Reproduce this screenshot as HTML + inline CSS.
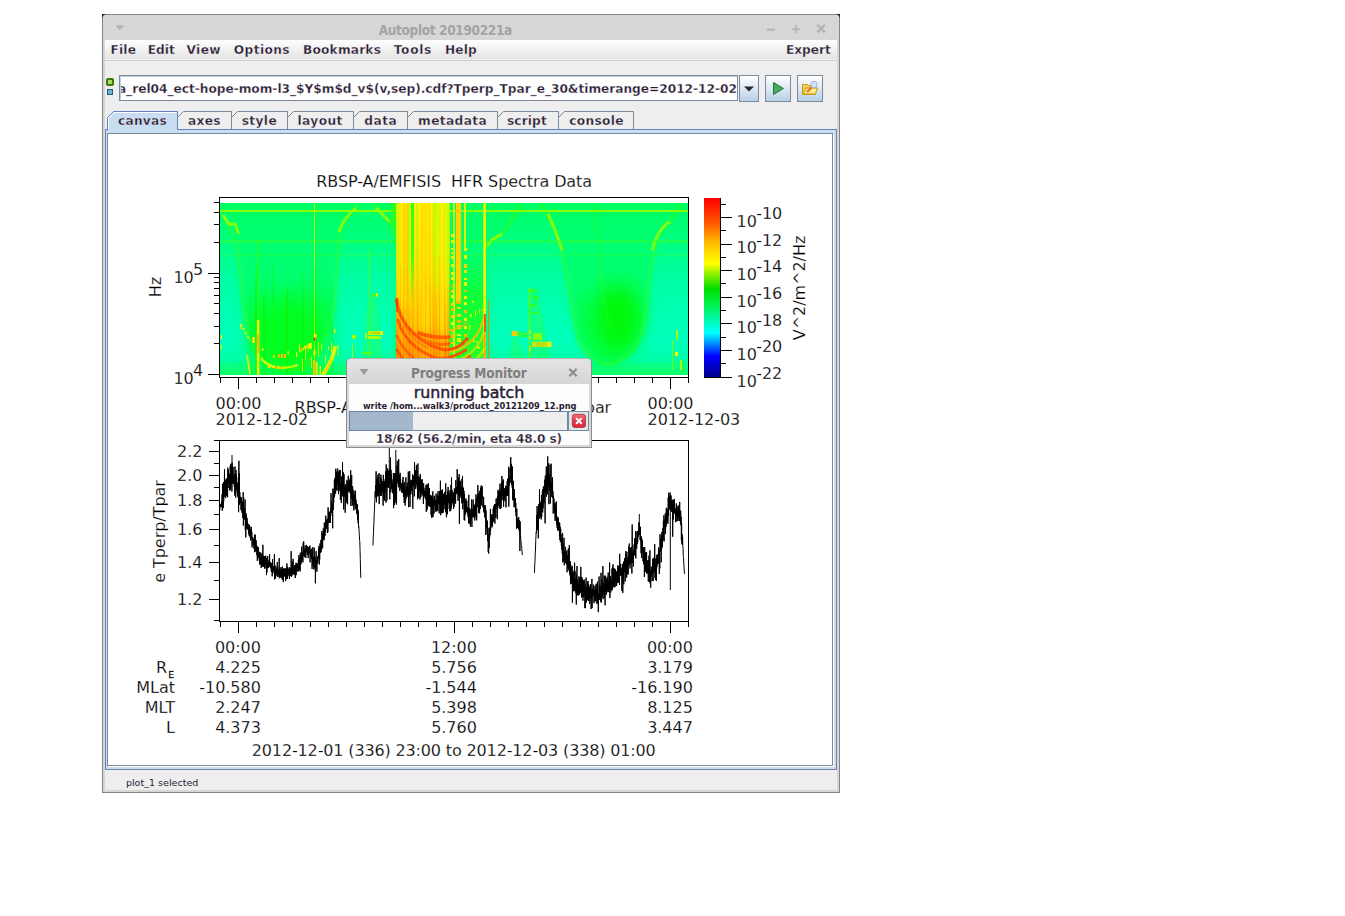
<!DOCTYPE html><html><head><meta charset="utf-8"><title>Autoplot 20190221a</title><style>
html,body{margin:0;padding:0;background:#fff;}
body{width:1345px;height:916px;position:relative;overflow:hidden;font-family:"DejaVu Sans","Liberation Sans",sans-serif;}
.abs{position:absolute;}
.t{position:absolute;white-space:pre;color:#2b1a33;}
.u{font-family:"DejaVu Sans","Liberation Sans",sans-serif;}
.c{font-family:"DejaVu Sans Condensed","DejaVu Sans","Liberation Sans",sans-serif;}
.bd{font-weight:bold;-webkit-text-stroke:0.4px rgba(244,244,244,.75);}
#win{left:102px;top:14px;width:738px;height:779px;background:#d7d7d7;box-sizing:border-box;border:1px solid #858585;}
#menubar{left:105px;top:40px;width:732px;height:19px;background:linear-gradient(#fefefe,#e4e4e4);}
#content{left:105px;top:60px;width:732px;height:730px;background:#eeeeee;}
svg text{font-family:"DejaVu Sans","Liberation Sans",sans-serif;}
</style></head><body>
<div id="win" class="abs"></div>
<svg class="abs" style="left:0;top:0" width="1345" height="916" viewBox="0 0 1345 916">
<path d="M102 14h4l-2 1-1 1-1 2z" fill="#0b2140"/><path d="M840 14h-4l2 1 1 1 1 2z" fill="#0b2140"/>
<path d="M115.5 25.2h8.6l-4.3 5.4z" fill="#b2b2b2"/>
<path d="M767 29.7h8" stroke="#b5b5b5" stroke-width="2" fill="none"/>
<path d="M792 29.2h8M796 25.2v8" stroke="#b5b5b5" stroke-width="1.8" fill="none"/>
<path d="M817.3 24.8l7.6 7.6M824.9 24.8l-7.6 7.6" stroke="#b2b2b2" stroke-width="2.2" fill="none"/>
</svg>
<div class="t c bd" style="left:378.70px;top:20.83px;font-size:13.5px;line-height:18px;letter-spacing:-0.335px;color:#a3a3a3;-webkit-text-stroke:0;">Autoplot 20190221a</div>
<div id="menubar" class="abs"></div>
<div id="content" class="abs"></div>
<div class="abs" style="left:105px;top:59px;width:732px;height:1px;background:#f1f1f1"></div>
<div class="abs" style="left:105px;top:60px;width:732px;height:1px;background:#cccccc"></div>
<div class="t u bd" style="left:110.60px;top:42.38px;font-size:12.2px;line-height:16px;letter-spacing:0.137px;">File</div>
<div class="t u bd" style="left:147.80px;top:42.38px;font-size:12.2px;line-height:16px;letter-spacing:-0.041px;">Edit</div>
<div class="t u bd" style="left:186.40px;top:42.38px;font-size:12.2px;line-height:16px;letter-spacing:0.42px;">View</div>
<div class="t u bd" style="left:233.80px;top:42.38px;font-size:12.2px;line-height:16px;letter-spacing:0.399px;">Options</div>
<div class="t u bd" style="left:303.00px;top:42.38px;font-size:12.2px;line-height:16px;letter-spacing:0.185px;">Bookmarks</div>
<div class="t u bd" style="left:393.70px;top:42.38px;font-size:12.2px;line-height:16px;letter-spacing:0.705px;">Tools</div>
<div class="t u bd" style="left:444.90px;top:42.38px;font-size:12.2px;line-height:16px;letter-spacing:0.181px;">Help</div>
<div class="t u bd" style="left:785.90px;top:42.38px;font-size:12.2px;line-height:16px;letter-spacing:-0.019px;">Expert</div>
<div class="abs" style="left:106px;top:78px;width:8px;height:8px;box-sizing:border-box;border:2px solid #3c7a00;border-radius:2px;background:#a6d96a"></div>
<div class="abs" style="left:107px;top:89px;width:6px;height:6px;box-sizing:border-box;border:1px solid #1f5c80;background:#6fb1d6"></div>
<div class="abs" style="left:119px;top:75px;width:619px;height:26px;box-sizing:border-box;border:1px solid #7a8a99;background:#fff;overflow:hidden;box-shadow:inset 1px 1px 0 #b8cfe5"></div>
<div class="abs" style="left:121px;top:77px;width:616px;height:22px;overflow:hidden">
<div class="t u bd" style="left:-3.10px;top:4.48px;font-size:12.2px;line-height:16px;letter-spacing:-0.031px;">a_rel04_ect-hope-mom-l3_$Y$m$d_v$(v,sep).cdf?Tperp_Tpar_e_30&amp;timerange=2012-12-02</div>
</div>
<div class="abs" style="left:739px;top:75px;width:20px;height:27px;box-sizing:border-box;border:1px solid #7a8a99;background:linear-gradient(#ffffff 0%,#e4edf6 40%,#b8cfe5 100%);"><svg width="18" height="25" style="position:absolute;left:0;top:0"><path d="M4 10.5h10l-5 5z" fill="#2a2a2a"/></svg></div>
<div class="abs" style="left:765px;top:75px;width:26px;height:27px;box-sizing:border-box;border:1px solid #7a8a99;background:linear-gradient(#ffffff 0%,#e4edf6 40%,#b8cfe5 100%);"><svg width="24" height="25" style="position:absolute;left:0;top:0"><path d="M7.5 6.5l10 6-10 6z" fill="#4aa95a" stroke="#1e7a34" stroke-width="1"/></svg></div>
<div class="abs" style="left:797px;top:75px;width:26px;height:27px;box-sizing:border-box;border:1px solid #7a8a99;background:linear-gradient(#ffffff 0%,#e4edf6 40%,#b8cfe5 100%);"><svg width="24" height="25" style="position:absolute;left:0;top:0"><path d="M4.5 8.5h5l1 1h7v9h-13z" fill="#f5d060" stroke="#c49a10" stroke-width="1"/><path d="M5.5 18l2-6h12l-2 6z" fill="#ffe98a" stroke="#c49a10" stroke-width="1"/><path d="M9 16l5-5" stroke="#e0702a" stroke-width="2"/><circle cx="16" cy="8.5" r="3.2" fill="#cfe4fb" stroke="#a9b8cf" stroke-width="1"/></svg></div>
<svg class="abs" style="left:0;top:0" width="1345" height="916" viewBox="0 0 1345 916" shape-rendering="crispEdges">
<rect x="105.5" y="129.5" width="731" height="640" fill="#c8ddf2" stroke="#6382bf"/>
<path d="M836.5 130V769.5H105" fill="none" stroke="#71849b"/>
<path d="M833.5 134V766.5H108" fill="none" stroke="#ffffff"/>
<rect x="107.5" y="133.5" width="725" height="632" fill="#ffffff" stroke="#7a8a99"/>
<path d="M107.5 130.5V117.5L113.5 111.5H177.5V129.5" fill="#c8ddf2" stroke="#6382bf" shape-rendering="geometricPrecision"/>
<path d="M108.5 129.5V118L114 112.5H176.5" fill="none" stroke="#ffffff" shape-rendering="geometricPrecision"/>
<rect x="108" y="129" width="69" height="2" fill="#c8ddf2"/>
<path d="M177.5 117.5L183.5 111.5H231.5V129" fill="#eeeeee" stroke="#7a8a99" shape-rendering="geometricPrecision"/>
<path d="M231.5 117.5L237.5 111.5H287.5V129" fill="#eeeeee" stroke="#7a8a99" shape-rendering="geometricPrecision"/>
<path d="M287.5 117.5L293.5 111.5H353.5V129" fill="#eeeeee" stroke="#7a8a99" shape-rendering="geometricPrecision"/>
<path d="M353.5 117.5L359.5 111.5H407.5V129" fill="#eeeeee" stroke="#7a8a99" shape-rendering="geometricPrecision"/>
<path d="M407.5 117.5L413.5 111.5H497.5V129" fill="#eeeeee" stroke="#7a8a99" shape-rendering="geometricPrecision"/>
<path d="M497.5 117.5L503.5 111.5H558.5V129" fill="#eeeeee" stroke="#7a8a99" shape-rendering="geometricPrecision"/>
<path d="M558.5 117.5L564.5 111.5H633.5V129" fill="#eeeeee" stroke="#7a8a99" shape-rendering="geometricPrecision"/>
</svg>
<div class="t u bd" style="left:118.10px;top:112.98px;font-size:12.2px;line-height:16px;letter-spacing:0.206px;">canvas</div>
<div class="t u bd" style="left:188.10px;top:112.98px;font-size:12.2px;line-height:16px;letter-spacing:0.298px;">axes</div>
<div class="t u bd" style="left:241.70px;top:112.98px;font-size:12.2px;line-height:16px;letter-spacing:0.386px;">style</div>
<div class="t u bd" style="left:297.50px;top:112.98px;font-size:12.2px;line-height:16px;letter-spacing:0.407px;">layout</div>
<div class="t u bd" style="left:364.30px;top:112.98px;font-size:12.2px;line-height:16px;letter-spacing:0.475px;">data</div>
<div class="t u bd" style="left:418.10px;top:112.98px;font-size:12.2px;line-height:16px;letter-spacing:0.373px;">metadata</div>
<div class="t u bd" style="left:507.00px;top:112.98px;font-size:12.2px;line-height:16px;letter-spacing:0.114px;">script</div>
<div class="t u bd" style="left:569.30px;top:112.98px;font-size:12.2px;line-height:16px;letter-spacing:0.292px;">console</div>
<div class="t u" style="left:125.90px;top:777.11px;font-size:9.5px;line-height:12px;letter-spacing:0.025px;">plot_1 selected</div>
<svg class="abs" style="left:0;top:0" width="1345" height="916" viewBox="0 0 1345 916">
<defs>
<linearGradient id="cb" x1="0" y1="0" x2="0" y2="1"><stop offset="0" stop-color="#ff0000"/><stop offset="0.133" stop-color="#ff5400"/><stop offset="0.247" stop-color="#ffb900"/><stop offset="0.365" stop-color="#ffff00"/><stop offset="0.44" stop-color="#70ec00"/><stop offset="0.506" stop-color="#00de00"/><stop offset="0.58" stop-color="#00f040"/><stop offset="0.753" stop-color="#00ffff"/><stop offset="0.882" stop-color="#0000ff"/><stop offset="1" stop-color="#000089"/></linearGradient>
<linearGradient id="bg" x1="0" y1="0" x2="0" y2="1"><stop offset="0" stop-color="#00ff64"/><stop offset="0.22" stop-color="#00ff80"/><stop offset="0.45" stop-color="#00ffa6"/><stop offset="0.8" stop-color="#00ffbc"/><stop offset="0.93" stop-color="#00ffa4"/><stop offset="1" stop-color="#08ff70"/></linearGradient>
<linearGradient id="yb" x1="0" y1="0" x2="0" y2="1"><stop offset="0" stop-color="#ffea00"/><stop offset="0.4" stop-color="#ffda00"/><stop offset="0.65" stop-color="#ffbc00"/><stop offset="0.85" stop-color="#ffa000"/><stop offset="1" stop-color="#ff9000"/></linearGradient>
<linearGradient id="gy" x1="0" y1="0" x2="0" y2="1"><stop offset="0" stop-color="#10ff38" stop-opacity="0"/><stop offset="0.28" stop-color="#10ff38" stop-opacity="0"/><stop offset="0.55" stop-color="#10ff34" stop-opacity=".9"/><stop offset="1" stop-color="#30ff20" stop-opacity=".95"/></linearGradient>
<linearGradient id="fg1" x1="0" y1="0" x2="0" y2="1"><stop offset="0" stop-color="#30ff10"/><stop offset="0.3" stop-color="#30ff10" stop-opacity=".9"/><stop offset="0.6" stop-color="#30ff10" stop-opacity="0"/></linearGradient>
<linearGradient id="fg2" x1="0" y1="0" x2="0" y2="1"><stop offset="0" stop-color="#a8ff00"/><stop offset="0.3" stop-color="#a8ff00" stop-opacity=".9"/><stop offset="0.6" stop-color="#a8ff00" stop-opacity="0"/></linearGradient>
<linearGradient id="fg3" x1="0" y1="0" x2="0" y2="1"><stop offset="0" stop-color="#d0fa00"/><stop offset="0.3" stop-color="#d0fa00" stop-opacity=".9"/><stop offset="0.6" stop-color="#d0fa00" stop-opacity="0"/></linearGradient>
<linearGradient id="ug" gradientUnits="userSpaceOnUse" x1="0" y1="225" x2="0" y2="320"><stop offset="0" stop-color="#00ff38" stop-opacity=".12"/><stop offset="1" stop-color="#00ff30" stop-opacity=".78"/></linearGradient>
<filter id="b0" x="-10%" y="-30%" width="120%" height="160%"><feGaussianBlur stdDeviation="0.7"/></filter>
<filter id="b1" x="-20%" y="-20%" width="140%" height="140%"><feGaussianBlur stdDeviation="1"/></filter>
<filter id="b3" x="-30%" y="-30%" width="160%" height="160%"><feGaussianBlur stdDeviation="4"/></filter>
<filter id="b8" x="-50%" y="-50%" width="200%" height="200%"><feGaussianBlur stdDeviation="10"/></filter>
<clipPath id="sp"><rect x="220" y="203" width="468" height="172"/></clipPath>
<clipPath id="lp"><rect x="220" y="441" width="468" height="180"/></clipPath>
</defs>
<g clip-path="url(#sp)">
<rect x="220" y="203" width="468" height="172" fill="url(#bg)"/>
<path d="M220 203 L222 214 C228 225 233 232 238 250 C242 300 246 335 256 352 C268 368 290 374 300 370 C316 360 330 335 335 300 C337 262 338 238 342 226 C347 214 354 210 358 203 Z" fill="url(#ug)" filter="url(#b3)"/>
<path d="M372 203 C380 212 388 218 392 226 C395 234 396 240 397 250 L397 375 L486 375 L486 250 C488 240 494 238 500 236 C508 228 514 216 520 203 Z" fill="url(#ug)" filter="url(#b3)"/>
<path d="M540 203 C548 214 552 222 558 236 C566 262 570 300 578 338 C586 356 598 366 608 366 C622 364 636 352 642 332 C648 300 650 262 656 242 C662 226 670 222 676 212 L680 203 Z" fill="url(#ug)" filter="url(#b3)"/>
<rect x="220" y="362" width="468" height="13" fill="#20ff40" opacity=".22"/>
<ellipse cx="290" cy="338" rx="40" ry="42" fill="#00ff08" opacity=".7" filter="url(#b8)"/>
<ellipse cx="618" cy="318" rx="22" ry="34" fill="#00f800" opacity=".9" filter="url(#b8)"/>
<path d="M222 214 C228 225 233 232 238 250 C242 300 246 335 256 352 C268 368 290 372 300 368 C316 358 330 335 335 300 C337 262 338 238 342 226 C347 214 354 210 358 203" fill="none" stroke="#48ff00" stroke-width="2.0" opacity="0.5" filter="url(#b1)"/>
<path d="M372 203 C380 212 388 218 392 226 C395 234 396 240 397 250" fill="none" stroke="#48ff00" stroke-width="2" opacity="0.6" filter="url(#b1)"/>
<path d="M486 250 C488 240 494 238 500 236 C508 228 514 216 520 203" fill="none" stroke="#48ff00" stroke-width="2.2" opacity="0.6" filter="url(#b1)"/>
<path d="M540 203 C548 214 552 222 558 236 C566 262 570 300 578 338 C586 356 598 364 608 364 C622 362 636 352 642 332 C648 300 650 262 656 242 C662 226 670 222 676 212 L680 203" fill="none" stroke="#48ff00" stroke-width="2.2" opacity="0.5" filter="url(#b1)"/>
<path d="M596 203 C598 260 602 300 610 330" fill="none" stroke="#48ff00" stroke-width="2" opacity="0.3" filter="url(#b1)"/>
<path d="M223 215 L229 224 L235 224 L239 234" fill="none" stroke="#a0ff00" stroke-width="2.8" opacity=".85" filter="url(#b0)"/>
<path d="M339 232 C342 222 348 214 356 208" fill="none" stroke="#a0ff00" stroke-width="2.8" opacity=".85" filter="url(#b0)"/>
<path d="M376 208 L384 216 L390 222" fill="none" stroke="#a0ff00" stroke-width="2.8" opacity=".85" filter="url(#b0)"/>
<path d="M488 246 C490 239 496 238 502 234" fill="none" stroke="#a0ff00" stroke-width="2.8" opacity=".85" filter="url(#b0)"/>
<path d="M548 214 C552 222 556 232 562 250" fill="none" stroke="#a0ff00" stroke-width="2.8" opacity=".85" filter="url(#b0)"/>
<path d="M652 250 C656 236 662 226 670 222" fill="none" stroke="#a0ff00" stroke-width="2.8" opacity=".85" filter="url(#b0)"/>
<rect x="220" y="210" width="468" height="2" fill="#8cff00"/>
<rect x="220" y="240.5" width="468" height="2" fill="#38ff28" opacity=".7"/>
<rect x="220" y="254" width="468" height="1.5" fill="#38ff28" opacity=".35"/>
<rect x="314" y="203" width="1" height="172" fill="#c8ff00" opacity=".9"/>
<rect x="257.3" y="240" width="1.2" height="135" fill="#40ff00" opacity=".8"/>
<rect x="368.5" y="250" width="1" height="125" fill="#60ff00" opacity=".7"/>
<rect x="286.0" y="296" width="1" height="79" fill="#10f000" opacity="0.53"/>
<rect x="287.1" y="292" width="1" height="83" fill="#10f000" opacity="0.43"/>
<rect x="263.5" y="293" width="1" height="82" fill="#10f000" opacity="0.44"/>
<rect x="314.6" y="268" width="1" height="107" fill="#10f000" opacity="0.34"/>
<rect x="255.6" y="311" width="1" height="64" fill="#10f000" opacity="0.46"/>
<rect x="251.5" y="321" width="1" height="54" fill="#10f000" opacity="0.54"/>
<rect x="302.9" y="299" width="1" height="76" fill="#10f000" opacity="0.30"/>
<rect x="249.3" y="294" width="1" height="81" fill="#10f000" opacity="0.27"/>
<rect x="264.0" y="277" width="1" height="98" fill="#10f000" opacity="0.26"/>
<rect x="287.0" y="288" width="1" height="87" fill="#10f000" opacity="0.50"/>
<rect x="291.6" y="300" width="1" height="75" fill="#10f000" opacity="0.40"/>
<rect x="303.6" y="289" width="1" height="86" fill="#10f000" opacity="0.33"/>
<rect x="331.8" y="322" width="1" height="53" fill="#10f000" opacity="0.50"/>
<rect x="307.5" y="281" width="1" height="94" fill="#10f000" opacity="0.32"/>
<rect x="272.3" y="266" width="1" height="109" fill="#10f000" opacity="0.48"/>
<rect x="281.6" y="313" width="1" height="62" fill="#10f000" opacity="0.37"/>
<rect x="328.5" y="313" width="1" height="62" fill="#10f000" opacity="0.25"/>
<rect x="265.6" y="317" width="1" height="58" fill="#10f000" opacity="0.39"/>
<rect x="330.4" y="286" width="1" height="89" fill="#10f000" opacity="0.27"/>
<rect x="300.9" y="309" width="1" height="66" fill="#10f000" opacity="0.33"/>
<rect x="255.3" y="282" width="1" height="93" fill="#10f000" opacity="0.54"/>
<rect x="311.7" y="269" width="1" height="106" fill="#10f000" opacity="0.32"/>
<rect x="256.5" y="266" width="1" height="109" fill="#10f000" opacity="0.49"/>
<rect x="262.9" y="296" width="1" height="79" fill="#10f000" opacity="0.38"/>
<rect x="264.0" y="306" width="1" height="69" fill="#10f000" opacity="0.29"/>
<rect x="302.1" y="269" width="1" height="106" fill="#10f000" opacity="0.38"/>
<g filter="url(#b0)">
<path d="M261 358 C265 364 272 367.5 281 368 C288 368 294 366.5 298 365" fill="none" stroke="#d4ff00" stroke-width="2.4" opacity=".9"/>
<path d="M240.5 324 L245 332 L250 340" fill="none" stroke="#dcff00" stroke-width="2" stroke-dasharray="3 1.5" opacity=".85"/>
<path d="M247 355 L250 374" fill="none" stroke="#f0e800" stroke-width="1.8" opacity=".9"/>
<path d="M323 375 L332 358.6 L335.4 346" fill="none" stroke="#f0f400" stroke-width="3.8" opacity=".95"/>
<path d="M325 372 L332.5 358" fill="none" stroke="#ffc400" stroke-width="1.3"/>
<path d="M299 352 C303 349 306 347 310 345" fill="none" stroke="#c8ff00" stroke-width="2" opacity=".8"/>
<rect x="256.8" y="320" width="2.6" height="55" fill="#ecf400"/><rect x="257.2" y="334" width="2" height="19" fill="#ffb400"/>
</g>
<rect x="275" y="366" width="2" height="3" fill="#ffb000"/>
<rect x="279.5" y="366" width="2" height="3" fill="#ffb800"/>
<rect x="268" y="364" width="2" height="4" fill="#ffe000"/>
<rect x="271.5" y="365" width="1.5" height="3" fill="#f8f000"/>
<rect x="278" y="354" width="2" height="4" fill="#ffb000"/>
<rect x="281" y="354" width="2" height="4" fill="#ffc000"/>
<rect x="284" y="354" width="2" height="4" fill="#ffc000"/>
<rect x="273" y="355" width="1.5" height="3" fill="#ffe800"/>
<rect x="252.3" y="337" width="2.5" height="6" fill="#ffe000"/>
<rect x="262" y="348" width="1.5" height="3" fill="#ffe800"/>
<rect x="240.3" y="324" width="1.2" height="5" fill="#ffd800"/>
<rect x="220.5" y="335" width="1.5" height="4" fill="#e8f800"/>
<rect x="220.5" y="345" width="1.5" height="4" fill="#d0ff00"/>
<rect x="308.8" y="343" width="3" height="6" fill="#fff000"/>
<rect x="313.6" y="337.4" width="1.6" height="3.5" fill="#ff3000"/>
<rect x="313.7" y="334" width="3" height="3.5" fill="#ffe000"/>
<rect x="313" y="360" width="2.5" height="15" fill="#ffc000"/>
<rect x="316" y="362" width="1.5" height="13" fill="#f0f000"/>
<rect x="319.5" y="366" width="1.5" height="9" fill="#e8ff00"/>
<rect x="313.5" y="350" width="2" height="5" fill="#f8e800"/>
<rect x="334" y="329" width="1.5" height="4" fill="#f0f000"/>
<rect x="304" y="345" width="1.5" height="3" fill="#ffc000"/>
<rect x="300.5" y="347" width="1.5" height="3" fill="#ff9800"/>
<rect x="287.5" y="351" width="1.2" height="4" fill="#f0f000"/>
<rect x="296" y="352" width="1.2" height="5" fill="#e0ff00"/>
<rect x="299" y="344" width="1" height="7" fill="#e8ff00" opacity=".8"/>
<rect x="302" y="359" width="1" height="13" fill="#e8ff00" opacity=".8"/>
<rect x="305" y="346" width="1" height="14" fill="#e8ff00" opacity=".8"/>
<rect x="307.5" y="344" width="1" height="8" fill="#e8ff00" opacity=".8"/>
<rect x="311" y="357" width="1" height="11" fill="#e8ff00" opacity=".8"/>
<rect x="318" y="342" width="1" height="15" fill="#e8ff00" opacity=".8"/>
<rect x="321" y="344" width="1" height="7" fill="#e8ff00" opacity=".8"/>
<rect x="325" y="355" width="1" height="8" fill="#e8ff00" opacity=".8"/>
<rect x="328" y="346" width="1" height="5" fill="#e8ff00" opacity=".8"/>
<rect x="331" y="342" width="1" height="10" fill="#e8ff00" opacity=".8"/>
<rect x="337.5" y="345" width="1" height="11" fill="#e8ff00" opacity=".8"/>
<rect x="352" y="335" width="4" height="4" fill="#90ff00"/>
<rect x="353" y="336" width="2" height="2" fill="#d0ff00"/>
<rect x="365" y="333" width="2" height="6" fill="#e8ff00"/>
<rect x="368" y="331" width="15" height="4" fill="#ffe400"/>
<rect x="372" y="332" width="8" height="2" fill="#ffc400"/>
<rect x="368" y="336" width="13" height="3" fill="#d8ff00"/>
<rect x="376" y="293" width="2" height="4" fill="#f0f000"/>
<rect x="372" y="294" width="4" height="2" fill="#50ff00"/>
<rect x="352" y="343" width="1" height="20" fill="#a0ff00"/>
<rect x="362" y="352" width="10" height="2" fill="#60ff20"/>
<path d="M360 375 L366 312 L370 292 L377 294 L384 375" fill="#30ff30" opacity=".3"/>
<rect x="391" y="203" width="6" height="60" fill="url(#fg1)" opacity=".8"/>
<rect x="396.2" y="203" width="53.3" height="172" fill="url(#yb)"/>
<rect x="403" y="203" width="5" height="172" fill="#ffc400" opacity=".55"/>
<rect x="421" y="203" width="9" height="172" fill="#ffd800" opacity=".55"/>
<rect x="399" y="203" width="4" height="172" fill="#ffe400" opacity=".55"/>
<rect x="440" y="203" width="4" height="172" fill="#ffec00" opacity=".55"/>
<rect x="397" y="203" width="2" height="172" fill="url(#fg3)"/>
<rect x="408" y="203" width="1.5" height="172" fill="url(#fg2)"/>
<rect x="411" y="203" width="3" height="172" fill="url(#fg1)"/>
<rect x="416.5" y="203" width="1" height="172" fill="url(#fg2)"/>
<rect x="433.5" y="203" width="1.5" height="172" fill="url(#fg2)"/>
<rect x="435" y="203" width="5" height="172" fill="url(#fg3)"/>
<rect x="444" y="203" width="5.5" height="172" fill="url(#fg3)"/>
<rect x="401.5" y="203" width="1" height="172" fill="#fbff20" opacity=".45"/>
<rect x="405" y="203" width="1" height="172" fill="#fbff20" opacity=".45"/>
<rect x="409.8" y="203" width="1" height="172" fill="#fbff20" opacity=".45"/>
<rect x="414.6" y="203" width="1" height="172" fill="#fbff20" opacity=".45"/>
<rect x="419" y="203" width="1" height="172" fill="#fbff20" opacity=".45"/>
<rect x="423.5" y="203" width="1" height="172" fill="#fbff20" opacity=".45"/>
<rect x="427" y="203" width="1" height="172" fill="#fbff20" opacity=".45"/>
<rect x="431" y="203" width="1" height="172" fill="#fbff20" opacity=".45"/>
<rect x="437.5" y="203" width="1" height="172" fill="#fbff20" opacity=".45"/>
<rect x="441.5" y="203" width="1" height="172" fill="#fbff20" opacity=".45"/>
<rect x="446" y="203" width="1" height="172" fill="#fbff20" opacity=".45"/>
<rect x="400" y="265" width="1" height="130" fill="#ffa800" opacity=".3"/>
<rect x="407" y="268" width="1" height="130" fill="#ffa800" opacity=".3"/>
<rect x="412.5" y="288" width="1" height="130" fill="#ffa800" opacity=".3"/>
<rect x="417.5" y="269" width="1" height="130" fill="#ffa800" opacity=".3"/>
<rect x="425" y="273" width="1" height="130" fill="#ffa800" opacity=".3"/>
<rect x="429.5" y="285" width="1" height="130" fill="#ffa800" opacity=".3"/>
<rect x="434" y="257" width="1" height="130" fill="#ffa800" opacity=".3"/>
<rect x="439" y="256" width="1" height="130" fill="#ffa800" opacity=".3"/>
<rect x="447.5" y="286" width="1" height="130" fill="#ffa800" opacity=".3"/>
<rect x="449.5" y="203" width="34" height="172" fill="url(#gy)"/>
<rect x="453" y="203" width="2" height="172" fill="#f0f400" opacity=".9"/>
<rect x="456" y="203" width="5" height="100" fill="#ffd200"/>
<rect x="464" y="203" width="2" height="45" fill="#f0f400" opacity=".9"/>
<rect x="451.0" y="234" width="3" height="3" fill="#ffe800"/>
<rect x="451.0" y="240" width="3" height="3" fill="#e8ff00"/>
<rect x="451.0" y="248" width="3" height="2" fill="#e8ff00"/>
<rect x="451.0" y="252" width="3" height="2" fill="#ffd000"/>
<rect x="451.0" y="256" width="3" height="3" fill="#ffe800"/>
<rect x="451.0" y="264" width="3" height="3" fill="#e8ff00"/>
<rect x="451.0" y="272" width="3" height="3" fill="#ffe800"/>
<rect x="451.0" y="277" width="3" height="3" fill="#ffe800"/>
<rect x="451.0" y="285" width="3" height="2" fill="#ffb800"/>
<rect x="451.0" y="290" width="3" height="3" fill="#ffd000"/>
<rect x="451.0" y="295" width="3" height="3" fill="#e8ff00"/>
<rect x="451.0" y="303" width="3" height="3" fill="#ffd000"/>
<rect x="451.0" y="308" width="3" height="3" fill="#ffb800"/>
<rect x="451.0" y="315" width="3" height="3" fill="#ffd000"/>
<rect x="451.0" y="322" width="3" height="3" fill="#e8ff00"/>
<rect x="451.0" y="329" width="3" height="3" fill="#ffd000"/>
<rect x="451.0" y="334" width="3" height="4" fill="#ffb800"/>
<rect x="451.0" y="342" width="3" height="2" fill="#ffd000"/>
<rect x="457.0" y="301" width="4" height="3" fill="#ffb800"/>
<rect x="457.0" y="307" width="4" height="2" fill="#ffd000"/>
<rect x="457.0" y="314" width="4" height="3" fill="#ffd000"/>
<rect x="457.0" y="320" width="4" height="3" fill="#ffb800"/>
<rect x="457.0" y="325" width="4" height="4" fill="#ffd000"/>
<rect x="457.0" y="334" width="4" height="2" fill="#e8ff00"/>
<rect x="457.0" y="338" width="4" height="4" fill="#e8ff00"/>
<rect x="457.0" y="344" width="4" height="2" fill="#ffd000"/>
<rect x="464.0" y="248" width="3" height="3" fill="#e8ff00"/>
<rect x="464.0" y="255" width="3" height="4" fill="#e8ff00"/>
<rect x="464.0" y="264" width="3" height="4" fill="#ffd000"/>
<rect x="464.0" y="270" width="3" height="3" fill="#ffd000"/>
<rect x="464.0" y="278" width="3" height="2" fill="#ffe800"/>
<rect x="464.0" y="282" width="3" height="4" fill="#e8ff00"/>
<rect x="464.0" y="290" width="3" height="2" fill="#ffb800"/>
<rect x="464.0" y="296" width="3" height="3" fill="#ffe800"/>
<rect x="464.0" y="302" width="3" height="3" fill="#e8ff00"/>
<rect x="464.0" y="310" width="3" height="3" fill="#ffb800"/>
<rect x="464.0" y="318" width="3" height="3" fill="#ffe800"/>
<rect x="464.0" y="326" width="3" height="3" fill="#ffe800"/>
<rect x="464.0" y="334" width="3" height="3" fill="#ffb800"/>
<rect x="464.0" y="340" width="3" height="3" fill="#ffe800"/>
<rect x="472" y="361" width="1" height="5" fill="#c0ff00" opacity=".8"/>
<rect x="481" y="309" width="2" height="2" fill="#ffc000" opacity=".8"/>
<rect x="474" y="364" width="3" height="3" fill="#ffc000" opacity=".8"/>
<rect x="477" y="346" width="3" height="3" fill="#c0ff00" opacity=".8"/>
<rect x="479" y="309" width="1" height="5" fill="#ffe000" opacity=".8"/>
<rect x="475" y="311" width="1" height="5" fill="#e0ff00" opacity=".8"/>
<rect x="472" y="301" width="2" height="2" fill="#e0ff00" opacity=".8"/>
<rect x="479" y="369" width="1" height="3" fill="#c0ff00" opacity=".8"/>
<rect x="476" y="341" width="2" height="2" fill="#e0ff00" opacity=".8"/>
<rect x="469" y="325" width="2" height="5" fill="#c0ff00" opacity=".8"/>
<rect x="478" y="330" width="1" height="2" fill="#e0ff00" opacity=".8"/>
<rect x="470" y="314" width="2" height="3" fill="#e0ff00" opacity=".8"/>
<rect x="467" y="364" width="3" height="2" fill="#ffc000" opacity=".8"/>
<rect x="473" y="338" width="1" height="3" fill="#ffe000" opacity=".8"/>
<rect x="473" y="340" width="2" height="2" fill="#c0ff00" opacity=".8"/>
<rect x="469" y="361" width="1" height="3" fill="#ffe000" opacity=".8"/>
<rect x="483.3" y="203" width="2.6" height="172" fill="#ffee00"/>
<rect x="483.5" y="332" width="2.2" height="30" fill="#ffa000"/>
<clipPath id="yc"><rect x="396.2" y="203" width="53.3" height="172"/></clipPath>
<g clip-path="url(#yc)"><ellipse cx="428" cy="356" rx="34" ry="24" fill="#ff7800" opacity=".5" filter="url(#b3)"/><ellipse cx="400" cy="335" rx="7" ry="30" fill="#ff7000" opacity=".4" filter="url(#b3)"/></g>
<path d="M396.5 300 C398 312 404 324 412 332 C422 341 434 348 445 350 C454 350 462 345 467 339" fill="none" stroke="#ff4200" stroke-width="3.2" stroke-linecap="round" opacity=".9" filter="url(#b0)"/>
<path d="M419 333 C426 336 436 338 449 337" fill="none" stroke="#ff4a00" stroke-width="3.6" stroke-linecap="round" opacity=".9" filter="url(#b0)"/>
<path d="M425 341 C432 344 440 345.5 449 343.5" fill="none" stroke="#ff5a00" stroke-width="3.0" stroke-linecap="round" opacity=".9" filter="url(#b0)"/>
<path d="M398 320 C401 331 408 341 417 348 C424 353 430 356 436 358 C446 360 456 356 466 350" fill="none" stroke="#ff4600" stroke-width="3.0" stroke-linecap="round" opacity=".9" filter="url(#b0)"/>
<path d="M397 336 C401 346 408 354 416 360 C422 364 428 367 436 368 C448 369 458 364 470 356" fill="none" stroke="#ff5200" stroke-width="2.8000000000000003" stroke-linecap="round" opacity=".9" filter="url(#b0)"/>
<path d="M397 350 C402 359 408 365 416 370 L426 375" fill="none" stroke="#ff4200" stroke-width="3.0" stroke-linecap="round" opacity=".9" filter="url(#b0)"/>
<path d="M397 363 C401 368 405 372 410 375" fill="none" stroke="#ff5a00" stroke-width="2.8000000000000003" stroke-linecap="round" opacity=".9" filter="url(#b0)"/>
<path d="M404 326 C410 336 418 343 427 348" fill="none" stroke="#ff7a00" stroke-width="2.2" stroke-linecap="round" opacity=".9" filter="url(#b0)"/>
<path d="M449 352 C458 351 468 346 476 336 C480 330 483 322 485 314" fill="none" stroke="#ffc000" stroke-width="2.2" opacity="0.8"/>
<path d="M452 362 C462 360 472 354 480 342 L485 330" fill="none" stroke="#ffd800" stroke-width="2.0" opacity="0.7"/>
<path d="M456 372 C466 369 476 362 485 348" fill="none" stroke="#f0f000" stroke-width="2.0" opacity="0.6"/>
<path d="M449 330 C455 330 462 327 468 322" fill="none" stroke="#ffb000" stroke-width="1.8" opacity="0.7"/>
<rect x="396.3" y="298" width="1.8" height="14" fill="#ff3800" opacity=".9"/>
<rect x="484" y="314" width="2" height="18" fill="#ff5000" opacity=".95"/>
<rect x="398.3" y="304" width="1" height="90" fill="#ffe800" opacity=".28"/>
<rect x="401.0" y="300" width="1" height="90" fill="#ffe800" opacity=".28"/>
<rect x="404.0" y="297" width="1" height="90" fill="#ffe800" opacity=".28"/>
<rect x="407.4" y="296" width="1" height="90" fill="#ffe800" opacity=".28"/>
<rect x="410.9" y="294" width="1" height="90" fill="#ffe800" opacity=".28"/>
<rect x="413.9" y="299" width="1" height="90" fill="#ffe800" opacity=".28"/>
<rect x="416.0" y="301" width="1" height="90" fill="#ffe800" opacity=".28"/>
<rect x="419.7" y="308" width="1" height="90" fill="#ffe800" opacity=".28"/>
<rect x="422.5" y="310" width="1" height="90" fill="#ffe800" opacity=".28"/>
<rect x="425.9" y="300" width="1" height="90" fill="#ffe800" opacity=".28"/>
<rect x="428.7" y="299" width="1" height="90" fill="#ffe800" opacity=".28"/>
<rect x="431.9" y="302" width="1" height="90" fill="#ffe800" opacity=".28"/>
<rect x="434.7" y="305" width="1" height="90" fill="#ffe800" opacity=".28"/>
<rect x="437.4" y="301" width="1" height="90" fill="#ffe800" opacity=".28"/>
<rect x="440.8" y="301" width="1" height="90" fill="#ffe800" opacity=".28"/>
<rect x="443.2" y="300" width="1" height="90" fill="#ffe800" opacity=".28"/>
<rect x="446.9" y="295" width="1" height="90" fill="#ffe800" opacity=".28"/>
<rect x="511.7" y="331" width="5.5" height="5" fill="#ffc800"/>
<rect x="517.5" y="332" width="10" height="5" fill="#30ff40"/>
<rect x="528.7" y="288" width="1.3" height="87" fill="#70ff00"/>
<rect x="529" y="330" width="2" height="4" fill="#ffe800"/>
<rect x="529" y="336" width="2" height="3" fill="#f0f000"/>
<rect x="529" y="346" width="2" height="5" fill="#ffe000"/>
<rect x="530" y="289" width="7" height="3" fill="#28ff28"/>
<rect x="532" y="296" width="6" height="3" fill="#28ff28"/>
<rect x="530" y="304" width="6" height="3" fill="#30ff30"/>
<rect x="531" y="312" width="7" height="2" fill="#30ff30"/>
<rect x="533" y="333" width="9" height="7" fill="#a8ff00"/>
<rect x="532" y="341.7" width="19.5" height="5.3" fill="#ffe400"/>
<rect x="536" y="343" width="4" height="3" fill="#ffc000"/>
<rect x="541" y="343" width="4" height="3" fill="#ffc400"/>
<rect x="488" y="300" width="1" height="60" fill="#ff8000"/>
<rect x="675" y="352" width="3" height="4" fill="#f0ff00"/>
<rect x="676" y="330" width="2" height="10" fill="#a0ff00"/>
<rect x="672" y="340" width="1" height="30" fill="#80ff00"/>
<rect x="680" y="360" width="2" height="10" fill="#c0ff00"/>
<path d="M508 375 L512 338 L518 338 L530 375Z" fill="#30ff30" opacity=".3"/>
<path d="M529 375 L529 290 L538 290 L545 330 L554 375Z" fill="#30ff30" opacity=".32"/>
</g>
<rect x="704" y="198" width="16.5" height="179.5" fill="url(#cb)"/>
<g fill="none" stroke="#000" stroke-width="1" shape-rendering="crispEdges">
<path d="M219.5 197.5H688.5V377.5H219.5Z"/>
<path d="M207.5 374.5H219M213.5 343.5H219M213.5 326.5H219M213.5 313.5H219M213.5 303.5H219M213.5 295.5H219M213.5 288.5H219M213.5 282.5H219M213.5 277.5H219M207.5 273.5H219M213.5 242.5H219M213.5 224.5H219M213.5 212.5H219M213.5 202.5H219M220.5 377V383M220.5 621V627M238.5 377V389M238.5 621V633M256.5 377V383M256.5 621V627M274.5 377V383M274.5 621V627M292.5 377V383M292.5 621V627M310.5 377V383M310.5 621V627M328.5 377V383M328.5 621V627M346.5 377V383M346.5 621V627M364.5 377V383M364.5 621V627M382.5 377V383M382.5 621V627M400.5 377V383M400.5 621V627M418.5 377V383M418.5 621V627M436.5 377V383M436.5 621V627M454.5 377V389M454.5 621V633M472.5 377V383M472.5 621V627M490.5 377V383M490.5 621V627M508.5 377V383M508.5 621V627M526.5 377V383M526.5 621V627M544.5 377V383M544.5 621V627M562.5 377V383M562.5 621V627M580.5 377V383M580.5 621V627M598.5 377V383M598.5 621V627M616.5 377V383M616.5 621V627M634.5 377V383M634.5 621V627M652.5 377V383M652.5 621V627M670.5 377V389M670.5 621V633M688.5 377V383M688.5 621V627M219.5 440.5H688.5V621.5H219.5ZM213.5 620.5H219M208.5 599.5H219M213.5 580.5H219M208.5 562.5H219M213.5 545.5H219M208.5 529.5H219M213.5 514.5H219M208.5 500.5H219M213.5 487.5H219M208.5 475.5H219M213.5 463.5H219M208.5 451.5H219M213.5 440.5H219M720.5 198V378M704 377.5H732M720 363.5H726M720 350.5H732M720 337.5H726M720 323.5H732M720 310.5H726M720 297.5H732M720 283.5H726M720 270.5H732M720 257.5H726M720 244.5H732M720 230.5H726M720 217.5H732M720 204.5H726"/>
</g>
<g font-size="16" fill="#000" letter-spacing="-0.04" stroke="#ffffff" stroke-width=".3" stroke-opacity=".7">
<text x="316.3" y="186.6" textLength="275.8" lengthAdjust="spacing" letter-spacing="0">RBSP-A/EMFISIS&#160; HFR Spectra Data</text>
<text x="173.4" y="282.6">10</text><text x="193" y="274.9">5</text>
<text x="173.4" y="383.8">10</text><text x="193" y="376.1">4</text>
<text transform="translate(160.6 287) rotate(-90)" text-anchor="middle">Hz</text>
<text x="215.6" y="409.2">00:00</text><text x="215.6" y="424.8">2012-12-02</text>
<text x="647.6" y="409.2">00:00</text><text x="647.6" y="424.8">2012-12-03</text>
<text x="294.6" y="413.4" textLength="316.6" lengthAdjust="spacing" letter-spacing="0">RBSP-A/HOPE Electron Temp Tperp/Tpar</text>
<text x="736.6" y="386.6">10</text><text x="756.2" y="378.9">-22</text>
<text x="736.6" y="359.9">10</text><text x="756.2" y="352.2">-20</text>
<text x="736.6" y="333.3">10</text><text x="756.2" y="325.6">-18</text>
<text x="736.6" y="306.6">10</text><text x="756.2" y="298.9">-16</text>
<text x="736.6" y="280.0">10</text><text x="756.2" y="272.3">-14</text>
<text x="736.6" y="253.3">10</text><text x="756.2" y="245.6">-12</text>
<text x="736.6" y="226.6">10</text><text x="756.2" y="218.9">-10</text>
<text transform="translate(804.5 288) rotate(-90)" text-anchor="middle">V^2/m^2/Hz</text>
<text x="202.4" y="605.1" text-anchor="end">1.2</text>
<text x="202.4" y="567.5" text-anchor="end">1.4</text>
<text x="202.4" y="534.9" text-anchor="end">1.6</text>
<text x="202.4" y="506.2" text-anchor="end">1.8</text>
<text x="202.4" y="480.5" text-anchor="end">2.0</text>
<text x="202.4" y="457.2" text-anchor="end">2.2</text>
<text transform="translate(165.3 531.5) rotate(-90)" text-anchor="middle">e Tperp/Tpar</text>
<text x="260.8" y="652.8" text-anchor="end">00:00</text>
<text x="260.8" y="672.8" text-anchor="end">4.225</text>
<text x="260.8" y="692.8" text-anchor="end">-10.580</text>
<text x="260.8" y="712.8" text-anchor="end">2.247</text>
<text x="260.8" y="732.8" text-anchor="end">4.373</text>
<text x="476.8" y="652.8" text-anchor="end">12:00</text>
<text x="476.8" y="672.8" text-anchor="end">5.756</text>
<text x="476.8" y="692.8" text-anchor="end">-1.544</text>
<text x="476.8" y="712.8" text-anchor="end">5.398</text>
<text x="476.8" y="732.8" text-anchor="end">5.760</text>
<text x="692.8" y="652.8" text-anchor="end">00:00</text>
<text x="692.8" y="672.8" text-anchor="end">3.179</text>
<text x="692.8" y="692.8" text-anchor="end">-16.190</text>
<text x="692.8" y="712.8" text-anchor="end">8.125</text>
<text x="692.8" y="732.8" text-anchor="end">3.447</text>
<text x="167.2" y="672.8" text-anchor="end">R</text><text x="168.2" y="677.7" font-size="9.2" letter-spacing="0" stroke="#000" stroke-width=".3">E</text>
<text x="174.9" y="692.8" text-anchor="end">MLat</text>
<text x="174.9" y="712.8" text-anchor="end">MLT</text>
<text x="174.9" y="732.8" text-anchor="end">L</text>
<text x="251.8" y="756" textLength="404" lengthAdjust="spacing" letter-spacing="0">2012-12-01 (336) 23:00 to 2012-12-03 (338) 01:00</text>
</g>
<g clip-path="url(#lp)" fill="none" stroke="#000" stroke-width="1" stroke-linejoin="round">
<polyline points="219.9,509.9 220.1,503.8 220.4,507 220.6,504.9 220.9,506.9 221.1,504.1 221.3,506.7 221.6,501.6 221.8,507 222.1,494.5 222.3,510.8 222.5,483.8 222.8,502.9 223,490.4 223.3,508.1 223.5,482.2 223.7,501.4 224,493.4 224.2,496.9 224.5,469 224.7,495.1 224.9,491 225.2,493.1 225.4,480.7 225.7,498.1 225.9,479.4 226.1,490.9 226.4,485.9 226.6,495.8 226.9,478.5 227.1,487.5 227.3,478 227.6,497.2 227.8,467.7 228.1,488 228.3,469.8 228.5,482.4 228.8,473.7 229,483.2 229.3,475.9 229.5,490.3 229.7,474.1 230,490.4 230.2,466 230.5,489.1 230.7,463.9 230.9,483.5 231.2,470 231.4,484.6 231.7,465.8 231.9,491.6 232.1,462.6 232.4,481.6 232.6,472.7 232.9,483.8 233.1,466.9 233.3,482.8 233.6,476.3 233.8,483.9 234.1,474.3 234.3,486.8 234.5,478.5 234.8,495.6 235,466.6 235.3,487.6 235.5,474.5 235.7,497.7 236,470.1 236.2,489.8 236.5,474.3 236.7,488 236.9,482.2 237.2,492.8 237.4,486 237.7,496.2 237.9,482.8 238.1,497.5 238.4,477.2 238.6,512.2 238.9,460.8 239.1,497.5 239.3,473.2 239.6,504.8 239.8,492.3 240.1,503.1 240.3,496.8 240.5,502.9 240.8,497 241,510.1 241.3,497.5 241.5,509.2 241.7,502.2 242,512.8 242.2,502.5 242.5,513.7 242.7,501.7 242.9,518.1 243.2,492.2 243.4,525.6 243.7,497.5 243.9,519.2 244.1,507.8 244.4,519.7 244.6,510.4 244.9,518.5 245.1,499.6 245.3,530.1 245.6,515.4 245.8,537.4 246.1,513.4 246.3,528.8 246.5,515.4 246.8,524.7 247,517.9 247.3,525 247.5,522.1 247.7,529.7 248,523.8 248.2,528.8 248.5,525.5 248.7,533.9 248.9,524.6 249.2,535.9 249.4,525.5 249.7,535.3 249.9,526.3 250.1,537.4 250.4,529 250.6,540.5 250.9,534 251.1,537.6 251.3,526.9 251.6,539.2 251.8,531.8 252.1,547.4 252.3,537.4 252.5,540.3 252.8,536.9 253,545 253.3,538.9 253.5,545 253.7,539.2 254,548.6 254.2,541.6 254.5,552.2 254.7,534.7 254.9,550.3 255.2,534.7 255.4,546.8 255.7,540.1 255.9,551.9 256.1,540.5 256.4,550.8 256.6,545.1 256.9,555.2 257.1,548.3 257.3,560.8 257.6,546.6 257.8,557.5 258.1,551.6 258.3,556.2 258.5,547.3 258.8,558.1 259,551.9 259.3,560.4 259.5,553.1 259.7,564.3 260,552.4 260.2,564.7 260.5,557.8 260.7,562.5 260.9,552.7 261.2,567.9 261.4,557.7 261.7,560.9 261.9,554.2 262.1,566.4 262.4,557.4 262.6,566.4 262.9,544.8 263.1,566 263.3,555.9 263.6,566.9 263.8,556.4 264.1,563.2 264.3,556.2 264.5,568.5 264.8,558.6 265,568.4 265.3,556.2 265.5,564.6 265.7,555.7 266,563.5 266.2,558.5 266.5,575.1 266.7,558.3 266.9,572.5 267.2,561.4 267.4,568.3 267.7,556.1 267.9,564.6 268.1,562.3 268.4,567.8 268.6,561.5 268.9,566.8 269.1,559.9 269.3,567.1 269.6,554.4 269.8,567 270.1,562.1 270.3,566.6 270.5,564.3 270.8,568.3 271,562.8 271.3,571.8 271.5,563.1 271.7,571.8 272,563.7 272.2,576.3 272.5,559.2 272.7,573.6 272.9,567.1 273.2,569.7 273.4,566.1 273.7,570.4 273.9,566.1 274.1,572.6 274.4,554 274.6,579.4 274.9,565.1 275.1,574.6 275.3,568.9 275.6,578.5 275.8,566.5 276.1,573.1 276.3,568.7 276.5,574.2 276.8,571.2 277,575.8 277.3,562 277.5,576.8 277.7,566.7 278,574 278.2,570.1 278.5,574.4 278.7,571.9 278.9,576.8 279.2,558.1 279.4,578.2 279.7,569.6 279.9,575.8 280.1,568.3 280.4,576.4 280.6,571.2 280.9,577.5 281.1,567.1 281.3,577.9 281.6,569.6 281.8,578.2 282.1,572.5 282.3,580 282.5,566.6 282.8,578.5 283,568.4 283.3,582.1 283.5,568.9 283.7,576.7 284,569.6 284.2,575.7 284.5,568.5 284.7,576.3 284.9,571.8 285.2,576.5 285.4,568.4 285.7,581.1 285.9,569.1 286.1,579 286.4,572.3 286.6,578.6 286.9,563.5 287.1,578 287.3,566.9 287.6,578.9 287.8,567.2 288.1,574.4 288.3,568.8 288.5,573.7 288.8,568.9 289,576.1 289.3,570.6 289.5,578.8 289.7,567.2 290,574 290.2,568.2 290.5,575.5 290.7,569.8 290.9,575.5 291.2,551.2 291.4,576.8 291.7,564.4 291.9,576 292.1,568.8 292.4,573.3 292.6,561.5 292.9,572.7 293.1,558.9 293.3,574.5 293.6,569.1 293.8,573.4 294.1,565.6 294.3,573.7 294.5,566.4 294.8,574.9 295,565 295.3,578 295.5,565 295.7,575.6 296,562.8 296.2,574.7 296.5,563.4 296.7,570 296.9,566.3 297.2,571.6 297.4,563.7 297.7,568.7 297.9,564.6 298.1,567.5 298.4,559.7 298.6,571.3 298.9,555 299.1,568 299.3,560.5 299.6,570 299.8,557.4 300.1,571.4 300.3,552.7 300.5,562.4 300.8,558.7 301,564.3 301.3,554.4 301.5,561.6 301.7,546.6 302,560 302.2,552.4 302.5,559.1 302.7,554.1 302.9,562.4 303.2,542.8 303.4,555.5 303.7,541.3 303.9,556 304.1,549.6 304.4,553.7 304.6,549 304.9,557.2 305.1,545.4 305.3,551.9 305.6,548.8 305.8,557.9 306.1,547.7 306.3,551.8 306.5,544.9 306.8,552.4 307,546.6 307.3,553.4 307.5,546.5 307.7,555 308,547.1 308.2,558.1 308.5,547.8 308.7,554 308.9,547.9 309.2,553.7 309.4,546.2 309.7,553 309.9,545.6 310.1,562.3 310.4,549.9 310.6,556.3 310.9,551.5 311.1,556.9 311.3,548.7 311.6,559 311.8,550 312.1,569 312.3,555.6 312.5,564.4 312.8,547.1 313,562.3 313.3,557 313.5,566.9 313.7,556.9 314,569.5 314.2,547.7 314.5,562.3 314.7,559.6 314.9,568.1 315.2,557 315.4,583.3 315.7,560.4 315.9,565 316.1,551.2 316.4,567.5 316.6,561.3 316.9,571.6 317.1,560.2 317.3,562 317.6,556.7 317.8,563.5 318.1,556.1 318.3,558.3 318.5,548.8 318.8,556.2 319,546 319.3,564.5 319.5,548 319.7,559.8 320,543.4 320.2,551.2 320.5,546.6 320.7,552.9 320.9,539.8 321.2,551.7 321.4,541.4 321.7,544.6 321.9,531 322.1,545.9 322.4,533.3 322.6,548.4 322.9,536.8 323.1,540.2 323.3,528.4 323.6,538.5 323.8,531.8 324.1,540.1 324.3,522.6 324.5,537.6 324.8,528.2 325,535.9 325.3,524.1 325.5,532 325.7,515.7 326,527 326.2,520.5 326.5,528.8 326.7,519.8 326.9,527.4 327.2,518.6 327.4,532.9 327.7,519 327.9,532 328.1,507.4 328.4,523.2 328.6,512 328.9,521.9 329.1,512.3 329.3,523 329.6,512.7 329.8,523 330.1,511.3 330.3,522.8 330.5,509.6 330.8,515.8 331,493.2 331.3,512.4 331.5,501.1 331.7,513 332,505.5 332.2,510.7 332.5,504 332.7,528.3 332.9,488.6 333.2,509.9 333.4,494.8 333.7,502.9 333.9,489.2 334.1,497.6 334.4,480.2 334.6,496.3 334.9,478.4 335.1,489.6 335.3,477.4 335.6,493.6 335.8,468.7 336.1,488.7 336.3,472.4 336.5,490.4 336.8,471.9 337,483.5 337.3,471 337.5,484.5 337.7,468.5 338,490.7 338.2,478.7 338.5,494.1 338.7,471.3 338.9,491.3 339.2,475.8 339.4,487.5 339.7,470.2 339.9,489.6 340.1,470 340.4,499.9 340.6,482.8 340.9,493 341.1,484.3 341.3,502.9 341.6,476.5 341.8,493.5 342.1,483 342.3,492.6 342.5,462.2 342.8,496.3 343,486.2 343.3,496.7 343.5,472.4 343.7,509.5 344,474.1 344.2,493 344.5,486.5 344.7,496.7 344.9,488.4 345.2,512.7 345.4,484.3 345.7,495.2 345.9,484.7 346.1,503.2 346.4,488.7 346.6,493.5 346.9,479.9 347.1,501.6 347.3,489 347.6,504.3 347.8,481.4 348.1,492 348.3,475.7 348.5,491.6 348.8,482.4 349,490.9 349.3,482.7 349.5,491.1 349.7,480.2 350,493.1 350.2,478.2 350.5,494.3 350.7,470.3 350.9,506 351.2,488.7 351.4,497.8 351.7,475.2 351.9,499.6 352.1,486.8 352.4,505.6 352.6,486.1 352.9,501.5 353.1,489.7 353.3,501.2 353.6,492.7 353.8,510.5 354.1,497.2 354.3,501.3 354.5,495.2 354.8,505.2 355,490.7 355.3,508.9 355.5,490.8 355.7,506.9 356,499.7 356.2,509.8 356.5,503.7 356.7,513.3 356.9,505.8 357.2,514.3 357.4,504.2 357.7,519.7 357.9,509.7 358.1,523.3 358.4,511.3 358.6,527.3 358.9,526.8 359.1,531.7 359.3,534.2 359.6,540.2 359.8,541.8 360.1,551.4 360.3,559.5 360.5,569.9 360.8,577.8"/>
<polyline points="373,545.4 373.2,537.9 373.5,532.6 373.7,526 374,521.6 374.2,513.9 374.4,511.2 374.7,501.6 374.9,499.8 375.2,491.1 375.4,497.3 375.6,485.2 375.9,490.3 376.1,471.3 376.4,502.3 376.6,479.4 376.8,492.7 377.1,478.7 377.3,495.3 377.6,477.4 377.8,496.5 378,474.6 378.3,496.1 378.5,481.4 378.8,495.4 379,473.1 379.2,504.1 379.5,484.8 379.7,489.3 380,486.2 380.2,490.4 380.4,477.5 380.7,495.6 380.9,474.6 381.2,496 381.4,478.9 381.6,491.1 381.9,486.2 382.1,492.4 382.4,481 382.6,490.3 382.8,483.7 383.1,505.7 383.3,474.9 383.6,498.3 383.8,484.9 384,493.3 384.3,481 384.5,500.6 384.8,483.6 385,492.5 385.2,479 385.5,488 385.7,471.3 386,502.6 386.2,464.4 386.4,487.1 386.7,472 386.9,500.5 387.2,475 387.4,480.3 387.6,468.4 387.9,487.6 388.1,476 388.4,487.6 388.6,470.6 388.8,479.9 389.1,474.3 389.3,480.3 389.6,469.6 389.8,499.3 390,473.9 390.3,478.3 390.5,457.5 390.8,492.4 391,469.8 391.2,484.2 391.5,474.3 391.7,489.2 392,479.4 392.2,484.7 392.4,482.8 392.7,493.3 392.9,485.6 393.2,492.3 393.4,473 393.6,508.2 393.9,477.5 394.1,503.5 394.4,480.3 394.6,505 394.8,473.2 395.1,502.9 395.3,473 395.6,498.9 395.8,473.6 396,484.6 396.3,474.1 396.5,504.4 396.8,465.8 397,483.7 397.2,460.8 397.5,480.6 397.7,471.9 398,482 398.2,477.3 398.4,487.3 398.7,459.1 398.9,486.6 399.2,477.4 399.4,484 399.6,474.8 399.9,491.1 400.1,472.8 400.4,486.1 400.6,479.4 400.8,488.7 401.1,483.1 401.3,488.9 401.6,483.5 401.8,492.4 402,485 402.3,493.1 402.5,480.7 402.8,492.8 403,476.9 403.2,491.5 403.5,488.4 403.7,497 404,484.4 404.2,503 404.4,482.1 404.7,499.3 404.9,489.2 405.2,505.6 405.4,491 405.6,501.1 405.9,477.4 406.1,498.5 406.4,489.9 406.6,495.2 406.8,486.4 407.1,495.2 407.3,482.7 407.6,494.7 407.8,488.9 408,496.9 408.3,471.6 408.5,507.2 408.8,489.5 409,491.3 409.2,488.6 409.5,494.7 409.7,471.1 410,506.9 410.2,484.8 410.4,494.2 410.7,480.6 410.9,494.3 411.2,479.8 411.4,487 411.6,480.4 411.9,491 412.1,480.4 412.4,487 412.6,474.4 412.8,508.7 413.1,475.3 413.3,485.6 413.6,476.7 413.8,485.6 414,478.4 414.3,496.4 414.5,462 414.8,481.9 415,472.1 415.2,480.5 415.5,470 415.7,489 416,473.5 416.2,482.4 416.4,464.9 416.7,484.4 416.9,470.2 417.2,487.4 417.4,477.9 417.6,499.3 417.9,463.5 418.1,489 418.4,478.1 418.6,498 418.8,476 419.1,487.8 419.3,480.7 419.6,490.8 419.8,478.1 420,499.5 420.3,474.1 420.5,497.8 420.8,483.7 421,496.8 421.2,479.6 421.5,493.6 421.7,483.5 422,493.5 422.2,479.4 422.4,493 422.7,486.3 422.9,495.6 423.2,486.4 423.4,504 423.6,483.2 423.9,497 424.1,490.9 424.4,494.5 424.6,491.2 424.8,496.8 425.1,487.7 425.3,498.8 425.6,492.9 425.8,499.2 426,484.9 426.3,511.9 426.5,491.9 426.8,510.5 427,484.2 427.2,509 427.5,491.1 427.7,505.3 428,484.9 428.2,501.6 428.4,483.3 428.7,506.1 428.9,487.8 429.2,504.6 429.4,488.4 429.6,506.6 429.9,495.6 430.1,504.9 430.4,494.9 430.6,506.6 430.8,498.3 431.1,515.2 431.3,495.6 431.6,517.4 431.8,496.8 432,517.7 432.3,500.7 432.5,507.6 432.8,491.4 433,517 433.2,499.4 433.5,506.7 433.7,500.3 434,513.5 434.2,495.8 434.4,505.6 434.7,496.4 434.9,505.9 435.2,500.3 435.4,510.8 435.6,500.2 435.9,511.7 436.1,493.5 436.4,510.2 436.6,501 436.8,511.3 437.1,500.6 437.3,504.5 437.6,495.4 437.8,510.7 438,491.1 438.3,504.1 438.5,496.2 438.8,503.8 439,497.1 439.2,513.4 439.5,491.1 439.7,504.8 440,496.4 440.2,503.9 440.4,480.7 440.7,515.2 440.9,497.3 441.2,512.6 441.4,490.4 441.6,513.1 441.9,492 442.1,504.1 442.4,489.4 442.6,513.2 442.8,493.2 443.1,512.6 443.3,497.7 443.6,504.6 443.8,494.1 444,509.3 444.3,494.2 444.5,501.6 444.8,491.9 445,505.2 445.2,497.2 445.5,512.2 445.7,483.4 446,503.6 446.2,495.9 446.4,517.2 446.7,495.2 446.9,501.1 447.2,495.1 447.4,514.3 447.6,490.9 447.9,508.8 448.1,487.1 448.4,502.9 448.6,496.6 448.8,501.5 449.1,492.6 449.3,503.6 449.6,495.6 449.8,511.4 450,490.2 450.3,506.2 450.5,495.1 450.8,510.5 451,484.9 451.2,508.3 451.5,477.5 451.7,505.4 452,489.8 452.2,502.9 452.4,497 452.7,503.2 452.9,492.3 453.2,503.2 453.4,492.5 453.6,508.8 453.9,497 454.1,506.8 454.4,488.3 454.6,499.9 454.8,490.5 455.1,501 455.3,491.6 455.6,503.6 455.8,480.2 456,494.3 456.3,487.8 456.5,492 456.8,486.8 457,493.7 457.2,469.2 457.5,492.3 457.7,481.7 458,500.8 458.2,477.2 458.4,489.4 458.7,479.9 458.9,496.5 459.2,474.1 459.4,524 459.6,480.9 459.9,497.8 460.1,482.7 460.4,495.5 460.6,480.9 460.8,494.1 461.1,486.6 461.3,498 461.6,489.4 461.8,503.3 462,478.7 462.3,497.6 462.5,475.9 462.8,509.3 463,494.3 463.2,502.5 463.5,487.7 463.7,503 464,490.9 464.2,519.9 464.4,494 464.7,520.5 464.9,499 465.2,514.8 465.4,500.9 465.6,513.7 465.9,498.5 466.1,509.3 466.4,506.2 466.6,512.2 466.8,500.7 467.1,510.7 467.3,507.2 467.6,513 467.8,509.8 468,516.7 468.3,509.2 468.5,522.6 468.8,494.8 469,523.8 469.2,508.1 469.5,516.3 469.7,509.6 470,523.6 470.2,509.7 470.4,526.5 470.7,513.9 470.9,520.8 471.2,508.5 471.4,518.7 471.6,499.5 471.9,526.9 472.1,509.3 472.4,516.8 472.6,513.6 472.8,515.3 473.1,499.5 473.3,517.2 473.6,504.7 473.8,514.1 474,508.4 474.3,518.2 474.5,506.3 474.8,520.4 475,504.5 475.2,508.9 475.5,503.5 475.7,517.2 476,494.4 476.2,506.9 476.4,498.3 476.7,520.3 476.9,499.9 477.2,507.2 477.4,496.4 477.6,499.8 477.9,485.1 478.1,502.2 478.4,494.9 478.6,513 478.8,493.4 479.1,510.1 479.3,495.1 479.6,513.4 479.8,491 480,498.8 480.3,490.1 480.5,508.7 480.8,487.6 481,505.8 481.2,485.5 481.5,504.4 481.7,486.9 482,498.3 482.2,486.4 482.4,499.2 482.7,496.2 482.9,506.9 483.2,500.2 483.4,508.5 483.6,496.9 483.9,512.4 484.1,505.2 484.4,512.1 484.6,506.7 484.8,517.2 485.1,505.1 485.3,518.3 485.6,507.4 485.8,535 486,510.5 486.3,525.3 486.5,518.4 486.8,528.6 487,521.6 487.2,533.7 487.5,520.7 487.7,541.3 488,527.9 488.2,551.9 488.4,545.1 488.7,553.6 488.9,534.1 489.2,547.9 489.4,529.9 489.6,537.6 489.9,527.5 490.1,535.1 490.4,508.9 490.6,530.3 490.8,518.2 491.1,525.8 491.3,520.2 491.6,523.5 491.8,514.1 492,527.5 492.3,517.1 492.5,526.1 492.8,515 493,518 493.2,508.5 493.5,521.9 493.7,506.5 494,518 494.2,505.3 494.4,513.9 494.7,504.1 494.9,523.7 495.2,505.1 495.4,508.3 495.6,504.1 495.9,517.6 496.1,498.7 496.4,508.9 496.6,502.8 496.8,507.4 497.1,498.1 497.3,519.2 497.6,496.5 497.8,503.8 498,489.8 498.3,505.8 498.5,491.4 498.8,503.2 499,496.7 499.2,508.3 499.5,491.3 499.7,500.5 500,483.7 500.2,509 500.4,489.2 500.7,501 500.9,488.7 501.2,507.8 501.4,482.9 501.6,495.3 501.9,476 502.1,500.2 502.4,481.2 502.6,495.8 502.8,485 503.1,494.1 503.3,479.4 503.6,506.7 503.8,489.1 504,494.4 504.3,490.7 504.5,499.2 504.8,488.2 505,501.3 505.2,489.5 505.5,495.2 505.7,486 506,507.4 506.2,485.7 506.4,495.7 506.7,487.3 506.9,493.7 507.2,481 507.4,496 507.6,478.7 507.9,495.7 508.1,481.8 508.4,494.2 508.6,466.7 508.8,506.6 509.1,476.3 509.3,485.7 509.6,478.9 509.8,481.1 510,467.9 510.3,482.7 510.5,457 510.8,472.5 511,468.1 511.2,476.2 511.5,464.2 511.7,484.9 512,474.7 512.2,487.5 512.4,466.5 512.7,499.8 512.9,480.6 513.2,500.5 513.4,481.2 513.6,498.8 513.9,495.8 514.1,507.2 514.4,489.2 514.6,504.7 514.8,502.6 515.1,507.3 515.3,498.1 515.6,512.2 515.8,503 516,515.8 516.3,513.2 516.5,528.9 516.8,508.6 517,519.5 517.2,518.3 517.5,528 517.7,520.2 518,525.3 518.2,519.2 518.4,528.5 518.7,517 518.9,529.5 519.2,519.9 519.4,531.8 519.6,523 519.9,551 520.1,521.3 520.4,534.9 520.6,535.7 520.8,540.7 521.1,541.2 521.3,545.5 521.6,545.6 521.8,549.4 522,550.9 522.3,555.1"/>
<polyline points="534.5,572.9 534.7,565.2 535,561.4 535.2,554.2 535.5,549 535.7,541.4 535.9,537.7 536.2,531.9 536.4,533.1 536.7,514.9 536.9,529.5 537.1,506.1 537.4,529 537.6,521.7 537.9,530.1 538.1,510.9 538.3,538.4 538.6,504.3 538.8,516.5 539.1,512.1 539.3,518.7 539.5,489.2 539.8,512.7 540,505.5 540.3,512.7 540.5,503.1 540.7,517.4 541,501.8 541.2,519.4 541.5,494.9 541.7,517 541.9,497.8 542.2,499.6 542.4,490.9 542.7,512.4 542.9,489.2 543.1,508.3 543.4,486.5 543.6,500 543.9,489.7 544.1,503.3 544.3,485.9 544.6,492.6 544.8,479.6 545.1,523.4 545.3,475.6 545.5,492.2 545.8,477.8 546,490.1 546.3,466.5 546.5,496.6 546.7,480.6 547,483.1 547.2,472.8 547.5,494.2 547.7,456.4 547.9,484.9 548.2,475.2 548.4,487 548.7,463.2 548.9,504.2 549.1,474.3 549.4,490.8 549.6,474.8 549.9,484.1 550.1,464.8 550.3,503.5 550.6,480 550.8,488.4 551.1,463.7 551.3,490.2 551.5,483.3 551.8,497.1 552,488.1 552.3,492.5 552.5,477.4 552.7,497.9 553,491.5 553.2,513.6 553.5,496.2 553.7,505.7 553.9,498.5 554.2,506.7 554.4,503.3 554.7,513.2 554.9,506.3 555.1,520.8 555.4,506.7 555.6,517.2 555.9,502.7 556.1,520.5 556.3,501.5 556.6,524.1 556.8,516.1 557.1,527.7 557.3,517.7 557.5,530.1 557.8,517.7 558,530.5 558.3,517.7 558.5,528.7 558.7,525.5 559,530.5 559.2,522.4 559.5,536.4 559.7,522.9 559.9,540 560.2,526.8 560.4,542.1 560.7,528.8 560.9,539 561.1,534.4 561.4,546.1 561.6,538.7 561.9,549.7 562.1,539.8 562.3,553.6 562.6,533.1 562.8,562.4 563.1,542.8 563.3,556 563.5,544.3 563.8,561.3 564,537.8 564.3,565.3 564.5,551.3 564.7,559.8 565,550.8 565.2,556.6 565.5,546.8 565.7,563.3 565.9,554.6 566.2,561.8 566.4,551.9 566.7,564.3 566.9,550.3 567.1,572.3 567.4,555.1 567.6,565.7 567.9,558.7 568.1,568.2 568.3,548.4 568.6,569.3 568.8,559.7 569.1,570.8 569.3,545 569.5,573.9 569.8,564.6 570,575.4 570.3,561.3 570.5,584.2 570.7,564.6 571,583.7 571.2,567.1 571.5,579.8 571.7,576.1 571.9,583.4 572.2,565.9 572.4,602.7 572.7,578 572.9,585.9 573.1,572 573.4,591.3 573.6,578.9 573.9,587.4 574.1,570.5 574.3,591.1 574.6,562.7 574.8,590.9 575.1,571.4 575.3,590.8 575.5,579.4 575.8,593.1 576,580.8 576.3,604.5 576.5,574.7 576.7,587.3 577,566 577.2,595.2 577.5,580.1 577.7,594.6 577.9,581.3 578.2,595.6 578.4,585.7 578.7,593.6 578.9,576.4 579.1,590.5 579.4,586.4 579.6,594.6 579.9,577.2 580.1,589.6 580.3,578.4 580.6,592.9 580.8,566.8 581.1,592 581.3,586.3 581.5,597.5 581.8,576.9 582,596.8 582.3,578.7 582.5,592 582.7,584.9 583,600.6 583.2,581.2 583.5,596.8 583.7,580.1 583.9,595.8 584.2,579.6 584.4,591.7 584.7,587.6 584.9,608 585.1,583.6 585.4,608.2 585.6,587.2 585.9,597.2 586.1,577.6 586.3,602.6 586.6,587 586.8,592.9 587.1,589.5 587.3,600.1 587.5,581.9 587.8,592.6 588,581 588.3,600.8 588.5,584.5 588.7,601 589,585.8 589.2,592.3 589.5,588.1 589.7,604.1 589.9,588.9 590.2,593.1 590.4,584.3 590.7,599 590.9,590.7 591.1,609 591.4,590.6 591.6,601.2 591.9,578.9 592.1,608 592.3,588.7 592.6,596.9 592.8,589.1 593.1,595.7 593.3,584.6 593.5,594.1 593.8,586 594,603.2 594.3,590 594.5,600.9 594.7,590.8 595,595.9 595.2,585.7 595.5,601.3 595.7,589.2 595.9,597.4 596.2,583.7 596.4,598.3 596.7,589.1 596.9,603.5 597.1,590.4 597.4,603.6 597.6,581.6 597.9,598.5 598.1,593.3 598.3,612.1 598.6,594.1 598.8,597.5 599.1,576.5 599.3,597.1 599.5,593.1 599.8,600 600,585.3 600.3,599.4 600.5,590.4 600.7,601.5 601,572.8 601.2,602.7 601.5,586.9 601.7,597.9 601.9,579.2 602.2,597.1 602.4,586 602.7,593.8 602.9,566 603.1,599.2 603.4,586.5 603.6,592.6 603.9,582.9 604.1,592.6 604.3,575.9 604.6,597.8 604.8,586.1 605.1,605.3 605.3,575.5 605.5,591.8 605.8,585.8 606,589.7 606.3,580.2 606.5,594.6 606.7,578.8 607,590.8 607.2,576.8 607.5,589.8 607.7,583.8 607.9,592.2 608.2,572.5 608.4,591.6 608.7,582.6 608.9,591.8 609.1,582.9 609.4,588.9 609.6,562.5 609.9,597.9 610.1,577.7 610.3,584.5 610.6,576 610.8,592.5 611.1,580.2 611.3,590 611.5,579.7 611.8,586.1 612,568.6 612.3,590.2 612.5,567 612.7,587.9 613,564.4 613.2,586.3 613.5,568.7 613.7,580.6 613.9,568 614.2,587.4 614.4,574.4 614.7,586.5 614.9,568.9 615.1,586.7 615.4,569.7 615.6,582.7 615.9,575.4 616.1,580.6 616.3,571.1 616.6,586 616.8,574 617.1,580.4 617.3,571.8 617.5,583.1 617.8,565.3 618,580.7 618.3,568.1 618.5,582.6 618.7,566 619,579.4 619.2,569.9 619.5,585 619.7,553.8 619.9,575 620.2,565.5 620.4,575.6 620.7,563.7 620.9,575.4 621.1,567.6 621.4,574.4 621.6,569.1 621.9,590.9 622.1,569.9 622.3,575.6 622.6,563.9 622.8,592.9 623.1,566.9 623.3,578 623.5,562.1 623.8,584.3 624,561.2 624.3,572.4 624.5,558.2 624.7,572.1 625,565.2 625.2,581.4 625.5,554 625.7,569.3 625.9,551 626.2,577.5 626.4,560 626.7,577.3 626.9,551.9 627.1,572.7 627.4,559.3 627.6,574.1 627.9,557.1 628.1,574.5 628.3,560.6 628.6,566.1 628.8,546.5 629.1,565.1 629.3,543.5 629.5,563.5 629.8,555.9 630,568.5 630.3,555.1 630.5,562.8 630.7,548 631,563.4 631.2,547 631.5,558.9 631.7,552.4 631.9,573.5 632.2,524.5 632.4,562.5 632.7,553.4 632.9,557.9 633.1,552.6 633.4,566.5 633.6,550.2 633.9,554.3 634.1,544.5 634.3,554.1 634.6,538.7 634.8,555.4 635.1,538.3 635.3,555.8 635.5,531.2 635.8,558.4 636,540.4 636.3,545.4 636.5,539.7 636.7,548.6 637,531.3 637.2,544.1 637.5,530.9 637.7,542.1 637.9,533.3 638.2,536.7 638.4,532.9 638.7,534.8 638.9,522.5 639.1,532.6 639.4,523.6 639.6,533.9 639.9,526.4 640.1,539.9 640.3,527 640.6,540.6 640.8,538.1 641.1,553.3 641.3,536.4 641.5,558 641.8,538.6 642,549.9 642.3,540.6 642.5,552.1 642.7,547.8 643,561.1 643.2,547.1 643.5,562.8 643.7,550.5 643.9,564.3 644.2,553.2 644.4,577 644.7,547 644.9,563.5 645.1,552.5 645.4,571.7 645.6,552.4 645.9,568.3 646.1,564.2 646.3,572.3 646.6,552.3 646.8,573.8 647.1,560.1 647.3,573.2 647.5,562.6 647.8,570.6 648,560.5 648.3,581.6 648.5,560.2 648.7,571.2 649,555.6 649.2,572.1 649.5,558.9 649.7,582 649.9,550.3 650.2,583.6 650.4,570 650.7,587.7 650.9,569.9 651.1,576.2 651.4,567 651.6,573.4 651.9,569.3 652.1,581 652.3,565.7 652.6,572.4 652.8,558.7 653.1,581.1 653.3,561.8 653.5,570.5 653.8,558.1 654,573.1 654.3,556.6 654.5,569.8 654.7,544.2 655,578.1 655.2,558.5 655.5,580 655.7,564.2 655.9,567.5 656.2,563.1 656.4,581 656.7,554.9 656.9,567.1 657.1,557.3 657.4,564.4 657.6,555 657.9,562.6 658.1,553.7 658.3,563.5 658.6,547.4 658.8,558.2 659.1,551.3 659.3,574 659.5,550.1 659.8,568.4 660,534.2 660.3,551.5 660.5,538.6 660.7,550.9 661,544.5 661.2,562.3 661.5,535.6 661.7,548.7 661.9,531.9 662.2,547.2 662.4,536.1 662.7,541.2 662.9,528.2 663.1,539.6 663.4,520.8 663.6,535.8 663.9,515.3 664.1,541.4 664.3,519.4 664.6,527.7 664.8,522.1 665.1,526.4 665.3,513.3 665.5,534.1 665.8,517.3 666,527.1 666.3,507.8 666.5,523.6 666.7,512.4 667,519.4 667.2,510.6 667.5,522 667.7,509 667.9,523.8 668.2,497.6 668.4,516 668.7,492.8 668.9,508.1 669.1,502.6 669.4,507.2 669.6,496.1 669.9,510 670.1,492.5 670.3,505.1 670.6,498.6 670.8,508.1 671.1,495.5 671.3,511.8 671.5,500.7 671.8,508.9 672,504.4 672.3,510.1 672.5,500.4 672.7,536.7 673,499.6 673.2,519.6 673.5,501.1 673.7,511.9 673.9,500.4 674.2,510.8 674.4,498.9 674.7,513.6 674.9,509.3 675.1,512.6 675.4,508.6 675.6,522.2 675.9,509.9 676.1,521.5 676.3,503.4 676.6,515.4 676.8,507.1 677.1,517 677.3,511.5 677.5,520.9 677.8,506.6 678,521.1 678.3,505.4 678.5,516.1 678.7,511.2 679,517.7 679.2,511.9 679.5,521 679.7,502 679.9,518.5 680.2,512.8 680.4,522.4 680.7,510.6 680.9,525.1 681.1,516.7 681.4,540 681.6,523 681.9,543.6 682.1,534.5 682.3,544.8 682.6,537.4 682.8,545.7 683.1,548.4 683.3,556.5 683.5,557.2 683.8,563.9 684,566.2 684.3,570.9 684.5,573.8"/>
<path d="M389.3 478V446M395.8 476V450M510.9 480V457M670.3 506V590M639.3 535V514M232 476V455"/>
</g>
</svg>
<div class="abs" style="left:346px;top:358px;width:246px;height:90px;box-sizing:border-box;border:1px solid #8c8c8c;border-top-color:#b4b0b0;border-radius:5px 5px 0 0;background:#d8d8d8;overflow:hidden"><div style="position:absolute;left:0;top:0;width:244px;height:25px;background:linear-gradient(#e4e4e4,#d5d5d5)"></div><div style="position:absolute;left:2px;top:25px;width:240px;height:61px;background:#fdfdfd"></div></div>
<svg class="abs" style="left:0;top:0" width="1345" height="916" viewBox="0 0 1345 916">
<path d="M359.6 369h8.8l-4.4 6z" fill="#9a9a9a"/>
<path d="M569.3 368.9l7.4 7.4M576.7 368.9l-7.4 7.4" stroke="#8f8f8f" stroke-width="2.2" fill="none"/>
<rect x="349.5" y="411.5" width="218" height="19" fill="#eeeeee" stroke="#6f84ad" shape-rendering="crispEdges"/>
<rect x="350" y="412" width="63" height="18" fill="#a3b8cc" shape-rendering="crispEdges"/>
<rect x="568.5" y="411.5" width="20" height="19" fill="#dce7f2" stroke="#7a8a99" shape-rendering="crispEdges"/>
<linearGradient id="rg" x1="0" y1="0" x2="0" y2="1"><stop offset="0" stop-color="#f2707a"/><stop offset=".5" stop-color="#e23a48"/><stop offset="1" stop-color="#d42c3a"/></linearGradient>
<rect x="572.3" y="414.3" width="13.2" height="13.2" rx="2.5" fill="url(#rg)" stroke="#c03440" stroke-width=".9"/>
<path d="M576.1 418.1l5.6 5.6M581.7 418.1l-5.6 5.6" stroke="#fff" stroke-width="2" fill="none"/>
</svg>
<div class="t c bd" style="left:410.90px;top:364.43px;font-size:13.5px;line-height:18px;letter-spacing:-0.159px;color:#7e7e7e;-webkit-text-stroke:0;">Progress Monitor</div>
<div class="t u" style="left:413.80px;top:381.53px;font-size:15.8px;line-height:21px;letter-spacing:-0.015px;color:#2b1a33;-webkit-text-stroke:0.45px #2b1a33;">running batch</div>
<div class="t u bd" style="left:362.90px;top:400.73px;font-size:8.3px;line-height:11px;letter-spacing:-0.002px;-webkit-text-stroke:0;">write /hom...walk3/product_20121209_12.png</div>
<div class="t u bd" style="left:375.70px;top:431.08px;font-size:12.2px;line-height:16px;letter-spacing:-0.166px;">18/62 (56.2/min, eta 48.0 s)</div>
</body></html>
